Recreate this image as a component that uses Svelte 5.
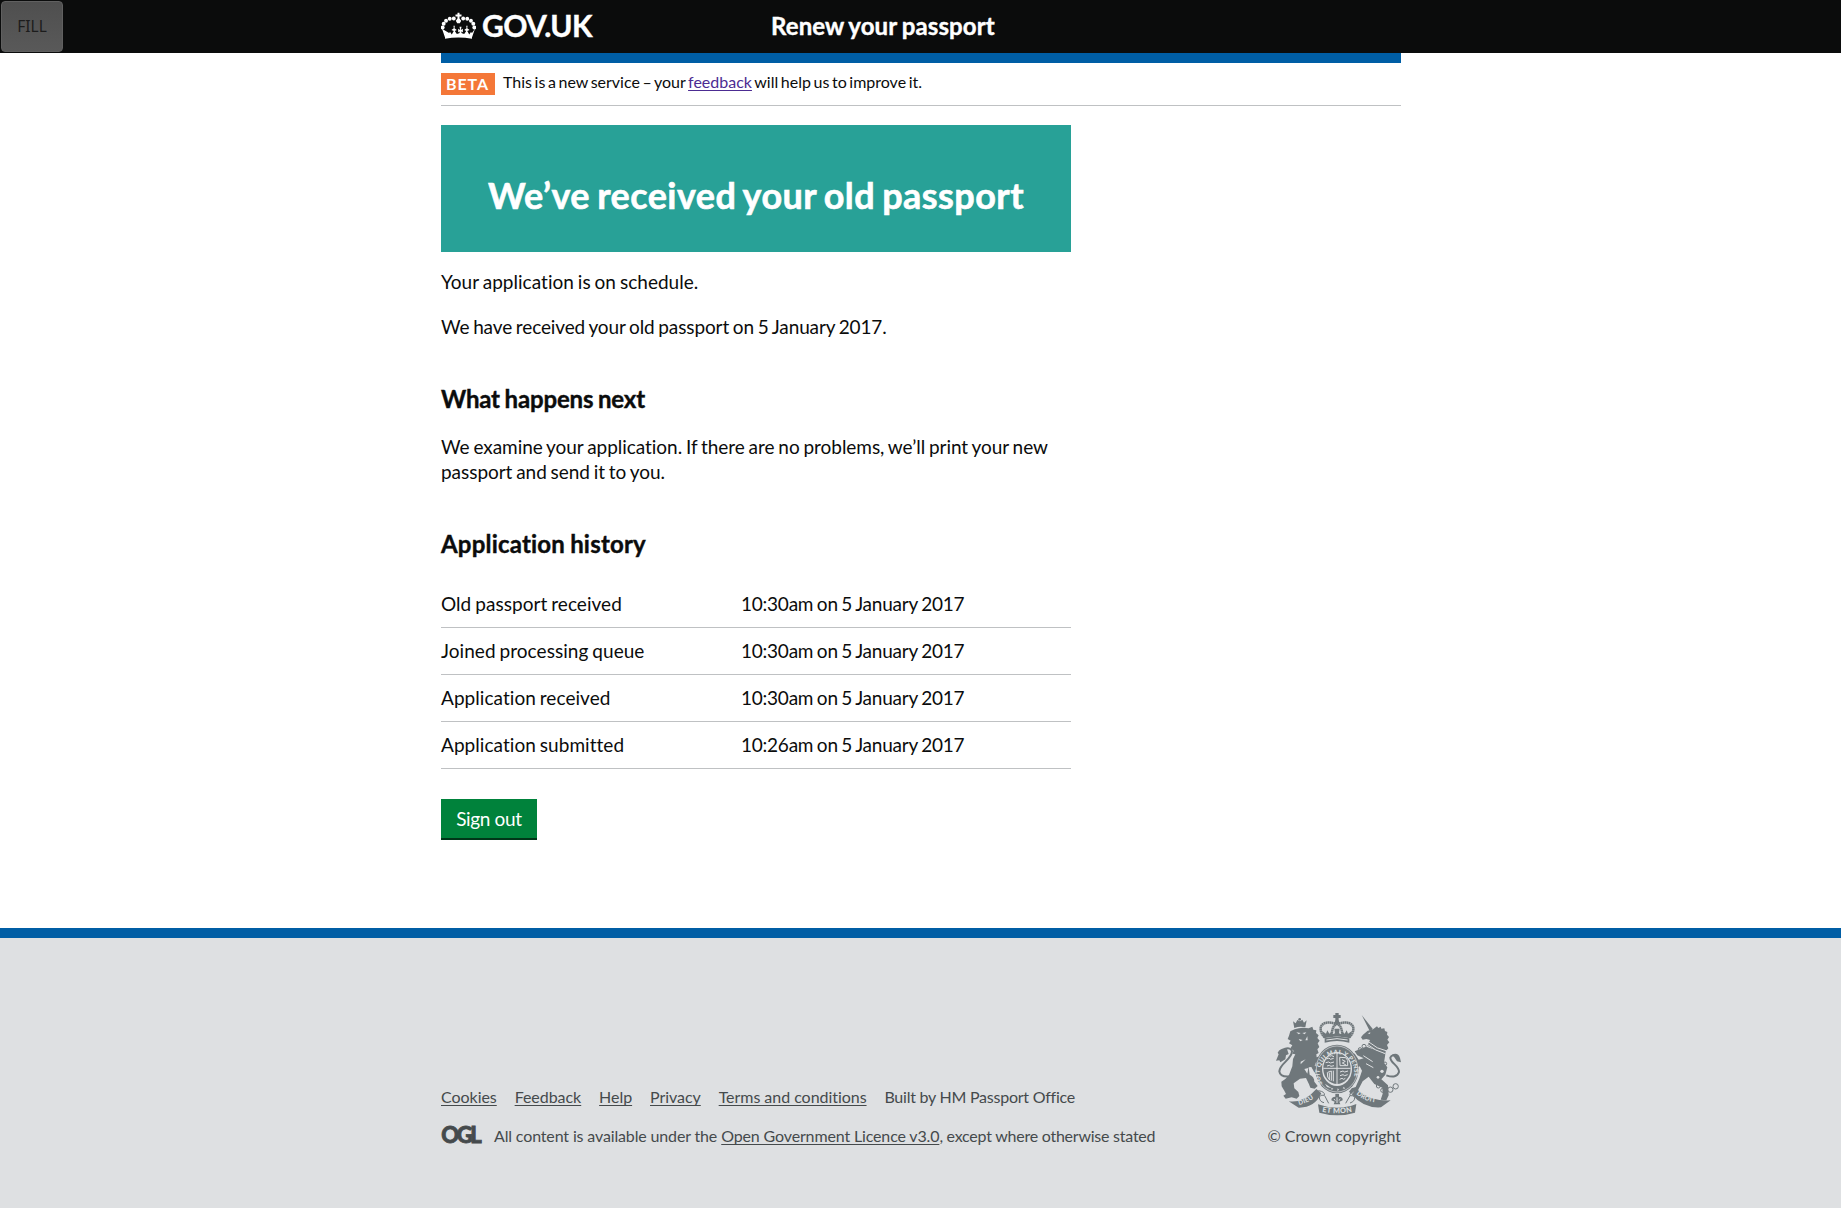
<script>
  const history = [
    { event: 'Old passport received', time: '10:30am on 5 January 2017' },
    { event: 'Joined processing queue', time: '10:30am on 5 January 2017' },
    { event: 'Application received', time: '10:30am on 5 January 2017' },
    { event: 'Application submitted', time: '10:26am on 5 January 2017' }
  ];
  const links = ['Cookies', 'Feedback', 'Help', 'Privacy', 'Terms and conditions'];
  const pearls = [[71, 41], [59, 42], [48, 48], [41, 57], [38, 68], [99, 41], [111, 42], [122, 48], [129, 57], [132, 68]];
</script>

<button class="fill">FILL</button>

<header class="top">
  <div class="wrap bar">
    <a class="logo" href="#home">
      <svg class="crown" viewBox="33 22 104 80" aria-hidden="true">
        <path d="M82 24h6v5h6v6h-6v6l5 7-4 7h-8l-4-7 5-7v-6h-6v-6h6z" />
        {#each pearls as [cx, cy]}<circle {cx} {cy} r="5.8" />{/each}
        <path d="M36 72l9 26q40-9 80 0l9-26-9 12-3-3-5 8-6-11 7-3-7-5 1-7h-4l1 7-7 5 6 3-6 9-7-2-3-5 6 2v-10l-6 3 2-9h-6l2 9-6-3v10l6-2-3 5-7 2-6-9 6-3-7-5 1-7h-4l1 7-7 5 7 3-6 11-5-8-3 3z" />
        <path d="M45 94q40-9 80 0v7q-40-6-80 0z" />
      </svg>
      <span>GOV.UK</span>
    </a>
    <span class="service">Renew your passport</span>
  </div>
</header>

<div class="wrap">
  <div class="stripe"></div>
  <div class="phase">
    <strong class="tag">BETA</strong>
    <span>This is a new service – your <a href="#feedback">feedback</a> will help us to improve it.</span>
  </div>

  <main>
    <div class="panel"><h1>We’ve received your old passport</h1></div>
    <p class="first">Your application is on schedule.</p>
    <p class="received">We have received your old passport on 5 January 2017.</p>
    <h2 class="next">What happens next</h2>
    <p>We examine your application. If there are no problems, we’ll print your new passport and send it to you.</p>
    <h2>Application history</h2>
    <dl>
      {#each history as row}
        <div class="row"><dt>{row.event}</dt><dd>{row.time}</dd></div>
      {/each}
    </dl>
    <button class="signout">Sign out</button>
  </main>
</div>

<footer>
  <div class="wrap foot">
    <div class="meta">
      <nav>
        {#each links as link}<a href="#footer">{link}</a>{/each}
        <span class="built">Built by HM Passport Office</span>
      </nav>
      <div class="licence">
        <svg class="ogl" viewBox="0 0 41 17"><text x="0.2" y="16.2" textLength="40.5" lengthAdjust="spacing">OGL</text></svg>
        <span><span class="pre">All content is available under the</span>{' '}<a class="open" href="#licence">Open Government Licence v3.0</a><span class="post">, except where otherwise stated</span></span>
      </div>
    </div>
    <div class="copyright">
      <svg class="crest" viewBox="78 38 375 309" aria-hidden="true">
        <defs>
          <path id="garter" d="M218 250A52 57 0 1 1 304 250L298 262" />
          <path id="dieu" d="M147 314Q180 307 207 281L225 262" />
          <path id="mon" d="M216 334Q262 344 312 333L340 325" />
          <path id="droit" d="M319 281Q342 304 386 307L420 309" />
        </defs>
        <!-- lion -->
        <path d="M133 83l-4-20 8 6 5-10 8 4 7-5 5 9 8-7-4 21q-16-5-33 2z" />
        <circle cx="149" cy="57" r="4" />
        <path d="M134 87q20-8 42-3l11-5 3 9 9 2-1 8 8 7-4 8 7 8-6 8 5 11-6 7 4 11-7 4 1 9 12-4 4 8-18 11-4 11 15 4-3 9 8 9-10 8-12-13-8-14-8 1 3 22q14 6 14 21l10 13-9 8-13-3-4-10-9-19-18 2-19 14 2 15 12 11 3 12-8 8-15-4-18 4-7-9 8-5-5-10-8-13-1-14 12-8 11-12 10-26 2-22 7-14-9-2 4-9-10-7 6-9-10-6 5-8-9-5 4-10 4-13z" />
        <path class="line8" d="M121 228Q91 232 88 213C89 190 126 177 126 153Q123 140 103 146" />
        <path d="M110 143q-20 0-27 14l3 5-8 19 10-1 3 6 15-9 2-12 8-4z" />
        <path class="cut" d="M139 96l13 2-6 4zM157 98l12-2-5 6zM146 116l12 3-7 4zM166 120l6-12 1 12zM152 184l15-7-15 15zM163 206l9 14 3-17z" />
        <!-- unicorn -->
        <path d="M335 44l34 43-10 5z" />
        <path d="M367 88l14-10 4 5 7-4 2 6 9-1 2 8 7 3-1 8 6 7-5 8 6 8-7 8 4 10-8 9-1 8-20-7-34-18 8-17-11-3-11 2-5-7 6-8 14-12z" />
        <path d="M349 139l34 12 23 11-4 25 10 14-6 22-12 14 20 18 2 30-7 15-17-2 6-18-1-18-24-11-17-22-18 14-14 27-14 3-6 8-7-7 8-10 12-4 11-25 8-24-7-13-24 12-8-8 8-4-13-15-11-6-10-11 3-14 12-4 11 8 17 4 12 18 15-4-19-9-8-12z" />
        <path class="line8" d="M409 225Q440 236 447 215C448 196 421 188 421 172Q426 158 445 170" />
        <path d="M426 163q18-8 24 10l3 13-12-3-7-11z" />
        <path class="cutline" d="M355 124q26 23 56 28M352 132q24 20 54 28M340 166l28 18M348 190l22 12" />
        <circle class="cut" cx="396" cy="213" r="5" /><circle class="cut" cx="384" cy="231" r="4" />
        <g class="rings"><circle cx="342" cy="138" r="6" /><circle cx="330" cy="147" r="5" /><circle cx="385" cy="257" r="6" /><circle cx="398" cy="270" r="6" /><circle cx="421" cy="268" r="8" /><circle cx="437" cy="258" r="8" /><circle cx="405" cy="190" r="5" /></g>
        <path class="cut" d="M353 99l8-3-1 5z" />
        <!-- crown -->
        <path d="M256 38h10v6h6v9h-6v9h-10v-9h-6v-9h6z" />
        <circle cx="261" cy="66" r="7" />
        <path class="dots" d="M261 73C248 64 215 62 212 83Q211 99 225 112M261 73C274 64 307 62 310 83Q311 99 297 112M256 73Q245 82 245 109M266 73Q277 82 277 109" />
        <path d="M222 114l-6-22 12 8 4-10 6 10 7-6 3 8 7-3-2-14h16l-2 14 7 3 3-8 7 6 6-10 4 10 12-8-6 22q-39-11-78 0z" />
        <path d="M224 114q37-10 74 0v13q-37-10-74 0z" />
        <path class="cutline" d="M229 119q32-8 64 0" />
        <!-- garter and shield -->
        <ellipse cx="261" cy="206" rx="65" ry="73" />
        <ellipse class="outline" cx="261" cy="206" rx="62" ry="69" />
        <ellipse class="disc" cx="261" cy="206" rx="45" ry="51" />
        <ellipse cx="261" cy="205" rx="41" ry="46" />
        <path class="cutline" d="M261 158v93M220 204h82" />
        <g class="charges">
          <path d="M229 176l8-3 4 4 10-3M227 187l9-2 5 3 11-3M231 197l7-2 5 3 9-2M239 168l6-2 7 3" />
          <path d="M269 171l18 1 6 8v16h-23zM276 178l10 5-9 5 11 6" />
          <path d="M233 216l11-4v29M238 217v21M232 216q-2 16 8 24M250 211v32" />
          <path d="M270 215l9-3 5 3 10-3M270 226l9-3 5 3 9-3M269 237l7-3 5 3 5-3" />
        </g>
        <text class="motto small"><textPath href="#garter">SOIT QUI MAL Y PENSE</textPath></text>
        <path class="cut" d="M225 250l20 14-14-4zM244 262l6 3-5 4zM263 264l4 4-5 4zM278 264l4-5 3 7z" />
        <!-- scroll -->
        <path d="M116 303q46 6 83-37l15 13q-20 44-68 43z" />
        <path d="M320 266q36 37 102 34l-29 21q-52 4-88-39z" />
        <path d="M204 312q58 21 115-1l-4 26q-53 16-107 0z" />
        <path class="line3" d="M205 271q21 3 18 14-12-3-15 5 0 14 14 17M317 273q-20 2-17 13 11-2 14 5 1 12-14 17M224 286l12 23M300 286l-13 23" />
        <path d="M256 281h11v8q12 0 11 11l-10 4 3 8h-20l3-8-10-4q0-11 12-11z" />
        <path class="cutline" d="M261 291v17M252 296l4 5M271 296l-5 5" />
        <text class="motto"><textPath href="#dieu">DIEU</textPath></text>
        <text class="motto wide"><textPath href="#mon">ET MON</textPath></text>
        <text class="motto"><textPath href="#droit">DROIT</textPath></text>
      </svg>
      <span>© Crown copyright</span>
    </div>
  </div>
</footer>

<style>
  :global(body) {
    margin: 0;
    background: #fff;
    color: #0b0c0c;
    font-family: Lato, 'Liberation Sans', sans-serif;
    font-variant-ligatures: none;
  }
  .wrap { width: 960px; margin: 0 auto; padding-left: 1px; }
  .fill {
    position: absolute;
    top: 1px;
    left: 1px;
    width: 62px;
    height: 51px;
    padding: 0 0 2px;
    border: 1px solid #606060;
    border-radius: 4px;
    background: linear-gradient(#4f4f4f, #595959);
    color: #1c1c1c;
    font: 15.5px 'Noto Sans', sans-serif;
  }
  .top { height: 53px; background: #0b0c0c; }
  .bar { display: flex; color: #fff; font-weight: 700; }
  .logo {
    display: flex;
    width: 330px;
    padding-top: 10px;
    color: #fff;
    font-size: 30px;
    line-height: 30px;
    letter-spacing: -0.6px;
    text-decoration: none;
    -webkit-text-stroke: 0.4px;
  }
  .crown { width: 35px; height: 27px; margin: 2px 6px 0 0; fill: #fff; }
  .service {
    padding-top: 11px;
    font-size: 24px;
    line-height: 30px;
    letter-spacing: 0.11px;
    word-spacing: -1px;
    -webkit-text-stroke: 0.4px;
  }
  .stripe { height: 10px; background: #005ea5; }
  .phase {
    display: flex;
    box-sizing: border-box;
    height: 43px;
    padding-top: 10px;
    border-bottom: 1px solid #bfc1c3;
    font-size: 16px;
    line-height: 20px;
    word-spacing: -1.5px;
  }
  .phase span { margin-top: -1px; }
  .phase a { color: #4c2c92; }
  .tag {
    box-sizing: border-box;
    width: 54px;
    height: 22px;
    margin-right: 8px;
    padding: 1px 0 0 5px;
    background: #f47738;
    color: #fff;
    letter-spacing: 0.9px;
  }
  a { text-decoration: underline 1px; text-underline-offset: 2px; text-decoration-skip-ink: none; }
  .logo { text-decoration: none; }
  main { width: 630px; margin-top: 19px; }
  .panel {
    box-sizing: border-box;
    height: 127px;
    padding-top: 50px;
    background: #28a197;
    color: #fff;
    text-align: center;
  }
  h1, h2, p, dl, dd { margin: 0; }
  h1, h2 { font-weight: 700; -webkit-text-stroke: 0.4px; }
  h1 { font-size: 36px; line-height: 40px; letter-spacing: 0.44px; word-spacing: -2px; -webkit-text-stroke-width: 0.6px; }
  h2 { margin-top: 45px; font-size: 24px; line-height: 30px; letter-spacing: 0.2px; word-spacing: -1px; }
  .next { letter-spacing: -0.16px; }
  p { margin-top: 20px; font-size: 19px; line-height: 25px; letter-spacing: -0.04px; word-spacing: -1px; }
  .first { margin-top: 17px; letter-spacing: 0.03px; }
  .received { letter-spacing: -0.12px; }
  dl { margin-top: 22px; }
  .row {
    display: grid;
    grid-template-columns: 300px 1fr;
    box-sizing: border-box;
    height: 47px;
    padding-top: 10px;
    border-bottom: 1px solid #bfc1c3;
    font-size: 19px;
    line-height: 25px;
    word-spacing: -1px;
  }
  dt { letter-spacing: 0.05px; }
  dd { letter-spacing: -0.24px; }
  .signout {
    display: block;
    width: 96px;
    height: 39px;
    margin-top: 30px;
    padding: 0 0 1px;
    border: 0;
    background: #00823b;
    box-shadow: 0 2px 0 #003618;
    color: #fff;
    font: 19px/25px Lato, sans-serif;
    letter-spacing: -0.35px;
  }
  footer {
    box-sizing: border-box;
    height: 280px;
    margin-top: 90px;
    padding-top: 75px;
    border-top: 10px solid #005ea5;
    background: #dee0e2;
    color: #454a4c;
    font-size: 16px;
    line-height: 20px;
    letter-spacing: -0.04px;
  }
  footer a { color: #454a4c; }
  .foot { display: flex; justify-content: space-between; align-items: flex-end; }
  nav { display: flex; gap: 17.9px; margin-bottom: 19px; }
  .built { letter-spacing: -0.24px; }
  .licence { display: flex; }
  .pre, .open { letter-spacing: -0.145px; }
  .post { letter-spacing: -0.24px; }
  .ogl { width: 41px; height: 17px; margin: 1px 12px 0 0; overflow: visible; fill: #454a4c; }
  .ogl text { font: 900 22px Lato, sans-serif; stroke: #454a4c; stroke-width: 0.8px; }
  .copyright { display: flex; flex-direction: column; align-items: flex-end; gap: 10px; }
  .crest { width: 125px; height: 103px; fill: #6f777b; }
  .cut, .disc { fill: #dee0e2; }
  .cutline, .outline, .charges { fill: none; stroke: #dee0e2; stroke-width: 3; }
  .outline { stroke-width: 2; }
  .line8 { fill: none; stroke: #6f777b; stroke-width: 6; }
  .line3, .rings { fill: none; stroke: #6f777b; stroke-width: 3; }
  .dots { fill: none; stroke: #6f777b; stroke-width: 7.5; stroke-dasharray: 5 1; }
  .motto { fill: #dee0e2; font: 900 19px Lato, sans-serif; letter-spacing: 1px; }
  .wide { font-size: 22px; }
  .small { font-size: 18px; }
</style>
